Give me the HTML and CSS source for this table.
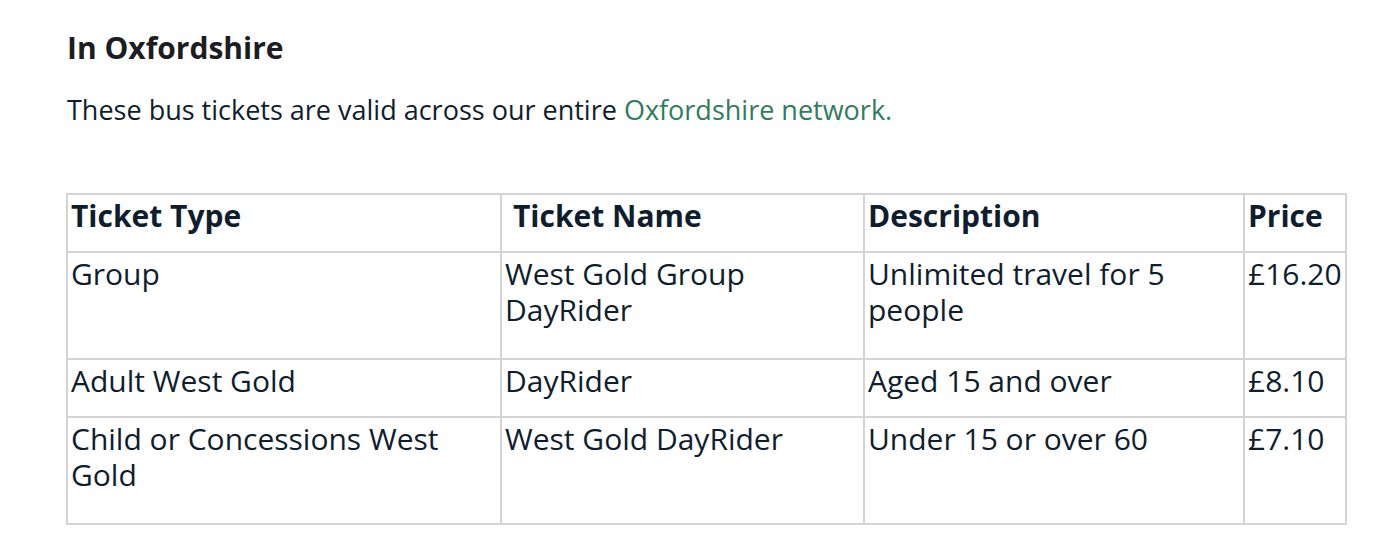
FILE: index.html
```html
<!DOCTYPE html>
<html>
<head>
<meta charset="utf-8">
<link rel="stylesheet" href="styles.css">
</head>
<body>
<h2 class="title">In Oxfordshire</h2>
<p class="intro">These bus tickets are valid across our entire <a class="link" href="#">Oxfordshire network.</a></p>
<table class="tickets">
  <colgroup>
    <col class="c1"><col class="c2"><col class="c3"><col class="c4">
  </colgroup>
  <tr class="head">
    <th>Ticket Type</th>
    <th class="indent">Ticket Name</th>
    <th>Description</th>
    <th>Price</th>
  </tr>
  <tr class="tall">
    <td>Group</td>
    <td>West Gold Group DayRider</td>
    <td>Unlimited travel for 5 people</td>
    <td>£16.20</td>
  </tr>
  <tr class="short">
    <td>Adult West Gold</td>
    <td>DayRider</td>
    <td>Aged 15 and over</td>
    <td>£8.10</td>
  </tr>
  <tr class="tall">
    <td>Child or Concessions West Gold</td>
    <td>West Gold DayRider</td>
    <td>Under 15 or over 60</td>
    <td>£7.10</td>
  </tr>
</table>
</body>
</html>
```

FILE: styles.css
```css
body {
  margin: 0;
  padding: 0 54px 0 66px;
  font-family: "Open Sans", "Liberation Sans", sans-serif;
  color: #0f1e2e;
  background: #fff;
}
.title {
  margin: 30px 0 0 1px;
  font-size: 30px;
  font-weight: 700;
  line-height: 36px;
  color: #1c1d22;
}
.intro {
  margin: 26px 0 0 1px;
  font-size: 27px;
  line-height: 36px;
}
.link {
  color: #2f7d5c;
  text-decoration: none;
}
.tickets {
  margin-top: 65px;
  width: 1279px;
  border-collapse: collapse;
  table-layout: fixed;
  font-size: 30px;
  line-height: 36px;
}
.c1 { width: 434px; }
.c2 { width: 363px; }
.c3 { width: 380px; }
.c4 { width: 102px; }
.tickets th,
.tickets td {
  border: 2px solid #d4d4d4;
  padding: 3px 3px 0 3px;
  text-align: left;
  vertical-align: top;
}
.tickets th { font-weight: 700; }
.tickets th.indent { padding-left: 11px; }
.head th, .short td { height: 53px; }
.tall td { height: 102px; }
```
